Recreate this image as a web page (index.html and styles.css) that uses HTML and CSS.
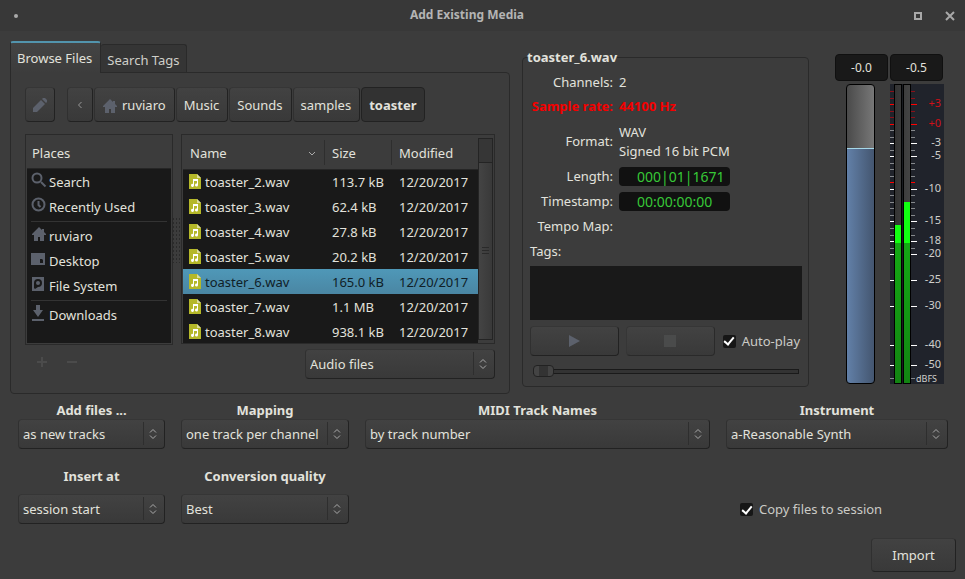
FILE: index.html
```html
<!DOCTYPE html>
<html lang="en">
<head>
<meta charset="utf-8">
<title>Add Existing Media</title>
<link rel="stylesheet" href="styles.css">
</head>
<body>
<svg class="defs" aria-hidden="true">
  <symbol id="home" viewBox="0 0 16 16"><path d="M8 1 1 8v1h2v6h4v-4h2v4h4V9h2V8l-2-2V3h-2v1z"/></symbol>
  <symbol id="audio" viewBox="0 0 12 15"><path fill="#b5b829" d="M0 0h8l4 4v11H0z"/><path fill="#dcdc9c" d="M8 0l4 4H8z"/><path fill="#fff" d="M4 5h5v6a1.500 1.500 0 1 1-1-1.400V7H5v4.500A1.500 1.500 0 1 1 4 10z"/></symbol>
  <symbol id="updown" viewBox="0 0 8 12"><path d="M1 4.500l3-3 3 3M1 7.500l3 3 3-3" fill="none" stroke="#aaa"/></symbol>
</svg>

<header class="titlebar">
  <span class="dot"></span>
  <h1>Add Existing Media</h1>
  <button class="win" aria-label="Maximize"><svg width="8" height="8"><path d="M1 1h6v6H1z" fill="none" stroke="#a8a8a8" stroke-width="2"/></svg></button>
  <button class="win" aria-label="Close"><svg width="10" height="10"><path d="M1 1l8 8M9 1L1 9" stroke="#a8a8a8" stroke-width="2"/></svg></button>
</header>

<main>
  <div class="upper">
    <section class="browser">
      <div class="tabs" role="tablist">
        <button class="tab active" role="tab" aria-selected="true">Browse Files</button>
        <button class="tab" role="tab" aria-selected="false">Search Tags</button>
      </div>
      <div class="panel">
        <nav class="path">
          <button class="btn edit" aria-label="Type a file name"><svg width="16" height="16" viewBox="0 0 16 16"><path d="M1 11l8-8 4 4-8 8H1zM10 2l1-1h2l2 2v2l-1 1z"/></svg></button>
          <button class="btn back" aria-label="Back"><svg width="6" height="8"><path d="M4.500 1l-3 3 3 3" fill="none" stroke="#999"/></svg></button>
          <button class="btn"><svg width="16" height="16"><use href="#home"/></svg>ruviaro</button>
          <button class="btn">Music</button>
          <button class="btn">Sounds</button>
          <button class="btn">samples</button>
          <button class="btn current">toaster</button>
        </nav>
        <div class="lists">
          <div class="places">
            <h2>Places</h2>
            <ul>
              <li><svg width="16" height="16" viewBox="0 0 16 16"><path d="M10 10l4.500 4.500" stroke="#5c616c" stroke-width="2"/><circle cx="6" cy="6" r="4.500" fill="none" stroke="#5c616c" stroke-width="2"/></svg>Search</li>
              <li><svg width="16" height="16" viewBox="0 0 16 16"><circle cx="7.500" cy="7.500" r="6" fill="none" stroke="#5c616c" stroke-width="2"/><path d="M7.500 4v4l2 2" fill="none" stroke="#5c616c" stroke-width="2"/></svg>Recently Used</li>
              <li class="group"><svg width="16" height="16"><use href="#home"/></svg>ruviaro</li>
              <li><svg width="16" height="16" viewBox="0 0 16 16"><path fill-rule="evenodd" d="M0 2h14v12H0zM9 8v4h3V9l-1-1z"/></svg>Desktop</li>
              <li><svg width="16" height="16" viewBox="0 0 16 16"><path d="M1 1h12v14H1z"/><path d="M3 12V7a4 4 0 1 1 4 4L4 13z" fill="#191919"/><circle cx="7" cy="7" r="2"/></svg>File System</li>
              <li class="group"><svg width="16" height="16" viewBox="0 0 16 16"><path d="M5 0h4v5h3l-5 7-5-7h3zM1 14h12v2H1z"/></svg>Downloads</li>
            </ul>
          </div>
          <div class="grip"></div>
          <div class="files">
            <table>
              <thead><tr><th>Name<svg width="8" height="6"><path d="M1 1l3 3 3-3" fill="none" stroke="#aaa"/></svg></th><th>Size</th><th>Modified</th></tr></thead>
              <tbody>
                <tr><td><svg width="12" height="15"><use href="#audio"/></svg>toaster_2.wav</td><td>113.7 kB</td><td>12/20/2017</td></tr>
                <tr><td><svg width="12" height="15"><use href="#audio"/></svg>toaster_3.wav</td><td>62.4 kB</td><td>12/20/2017</td></tr>
                <tr><td><svg width="12" height="15"><use href="#audio"/></svg>toaster_4.wav</td><td>27.8 kB</td><td>12/20/2017</td></tr>
                <tr><td><svg width="12" height="15"><use href="#audio"/></svg>toaster_5.wav</td><td>20.2 kB</td><td>12/20/2017</td></tr>
                <tr class="selected"><td><svg width="12" height="15"><use href="#audio"/></svg>toaster_6.wav</td><td>165.0 kB</td><td>12/20/2017</td></tr>
                <tr><td><svg width="12" height="15"><use href="#audio"/></svg>toaster_7.wav</td><td>1.1 MB</td><td>12/20/2017</td></tr>
                <tr><td><svg width="12" height="15"><use href="#audio"/></svg>toaster_8.wav</td><td>938.1 kB</td><td>12/20/2017</td></tr>
              </tbody>
            </table>
            <div class="scroll"><div class="thumb"></div></div>
          </div>
        </div>
        <div class="below">
          <button class="mini" aria-label="Add bookmark" disabled><svg width="10" height="10"><path d="M5 0v10M0 5h10" stroke="#4b4b4b" stroke-width="2"/></svg></button>
          <button class="mini" aria-label="Remove bookmark" disabled><svg width="10" height="10"><path d="M0 5h10" stroke="#4b4b4b" stroke-width="2"/></svg></button>
          <span class="select filter"><select aria-label="File filter"><option>Audio files</option></select><svg width="8" height="12"><use href="#updown"/></svg></span>
        </div>
      </div>
    </section>

    <fieldset class="info">
      <legend>toaster_6.wav</legend>
      <dl>
        <dt>Channels:</dt><dd>2</dd>
        <dt class="warn">Sample rate:</dt><dd class="warn">44100 Hz</dd>
        <dt class="format">Format:</dt><dd class="format">WAV<br>Signed 16 bit PCM</dd>
        <dt>Length:</dt><dd><span class="clock">000|01|1671</span></dd>
        <dt>Timestamp:</dt><dd><span class="clock">00:00:00:00</span></dd>
        <dt>Tempo Map:</dt><dd></dd>
      </dl>
      <label class="taglabel" for="tags">Tags:</label>
      <textarea id="tags"></textarea>
      <div class="transport">
        <button class="btn" aria-label="Play"><svg width="12" height="12"><path d="M1 0l11 6-11 6z"/></svg></button>
        <button class="btn off" aria-label="Stop" disabled><svg width="12" height="12"><path d="M0 0h12v12H0z" fill="#4a4b4b"/></svg></button>
        <label class="check"><input type="checkbox" checked>Auto-play</label>
      </div>
      <input class="seek" type="range" value="0" aria-label="Position">
    </fieldset>

    <section class="level">
      <input class="readout" value="-0.0" aria-label="Gain">
      <button class="readout">-0.5</button>
      <input class="fader" type="range" value="79" aria-label="Gain fader">
      <svg class="meter" width="54" height="300" viewBox="0 0 54 300" role="img" aria-label="Level meter">
        <defs>
          <linearGradient id="trough"><stop stop-color="#333"/><stop offset="1" stop-color="#444"/></linearGradient>
          <linearGradient id="green" x1="0" y1="0" x2="0" y2="1"><stop stop-color="#14a814"/><stop offset="1" stop-color="#128412"/></linearGradient>
        </defs>
        <path fill="#20232b" d="M0 0h54v300H0z"/>
        <path stroke="#85888c" d="M0 46.500h25M0 53.500h25M0 66.500h25M0 79.500h25M0 85.500h25M0 92.500h25M0 111.500h25M0 118.500h25M0 124.500h25M0 131.500h25M0 144.500h25M0 151.500h25M0 164.500h25M0 294.500h25"/>
        <path stroke="#8c1018" d="M0 7.500h25M0 14.500h25M0 27.500h25M0 33.500h25"/>
        <path stroke="#f00" d="M0 20.500h27M0 40.500h27M0 98.500h25"/>
        <path stroke="#fff" d="M0 59.500h27M0 72.500h27M0 105.500h27M0 137.500h27M0 157.500h27M0 170.500h27M0 196.500h27M0 222.500h27M0 261.500h27M0 281.500h27"/>
        <path fill="#000" d="M4 0h8v300H4zM13 0h8v300h-8z"/><path fill="#191b20" d="M12 0h1v300h-1z"/>
        <path fill="url(#trough)" d="M5 1h6v298H5zM14 1h6v298h-6z"/>
        <path fill="#1f1" d="M5 141h6v18H5zM14 118h6v41h-6z"/>
        <path fill="url(#green)" d="M5 159h6v140H5zM14 159h6v140h-6z"/>
        <g class="scale">
          <g class="hot"><text x="51" y="23">+3</text><text x="51" y="43">+0</text></g>
          <text x="51" y="62">-3</text><text x="51" y="75">-5</text><text x="51" y="108">-10</text><text x="51" y="140">-15</text><text x="51" y="160">-18</text><text x="51" y="173">-20</text><text x="51" y="199">-25</text><text x="51" y="225">-30</text><text x="51" y="264">-40</text><text x="51" y="284">-50</text>
          <text class="unit" x="47" y="298">dBFS</text>
        </g>
      </svg>
    </section>
  </div>

  <div class="options">
    <div class="field"><label for="add">Add files ...</label><span class="select"><select id="add"><option>as new tracks</option></select><svg width="8" height="12"><use href="#updown"/></svg></span></div>
    <div class="field"><label for="map">Mapping</label><span class="select"><select id="map"><option>one track per channel</option></select><svg width="8" height="12"><use href="#updown"/></svg></span></div>
    <div class="field"><label for="midi">MIDI Track Names</label><span class="select"><select id="midi"><option>by track number</option></select><svg width="8" height="12"><use href="#updown"/></svg></span></div>
    <div class="field"><label for="inst">Instrument</label><span class="select"><select id="inst"><option>a-Reasonable Synth</option></select><svg width="8" height="12"><use href="#updown"/></svg></span></div>
    <div class="field tall"><label for="insert">Insert at</label><span class="select"><select id="insert"><option>session start</option></select><svg width="8" height="12"><use href="#updown"/></svg></span></div>
    <div class="field tall"><label for="quality">Conversion quality</label><span class="select"><select id="quality"><option>Best</option></select><svg width="8" height="12"><use href="#updown"/></svg></span></div>
    <label class="check copy"><input type="checkbox" checked>Copy files to session</label>
  </div>
  <footer><button class="btn import">Import</button></footer>
</main>
</body>
</html>
```
FILE: styles.css
```css
* { box-sizing: border-box; }
body {
  margin: 0;
  min-height: 100vh;
  background: #3c3c3c;
  color: #e2e2dc;
  font: 13px/19px "Noto Sans", sans-serif;
}
button, input, select, textarea { font: inherit; color: inherit; margin: 0; padding: 0; border: 0; background: none; }
h1, h2, ul, dl, dd { margin: 0; padding: 0; }
svg { fill: #5c616c; flex: none; }
.defs { display: none; }

.titlebar {
  display: grid;
  grid-template-columns: 33px 1fr 33px 31px;
  align-items: center;
  height: 31px;
  background: #383838;
}
.titlebar h1 { font-size: 12px; line-height: 16px; margin-bottom: 1px; text-align: center; color: #b4b4b4; }
.dot { width: 4px; height: 4px; margin-left: 14px; border-radius: 2px; background: #aaa; }
.win { display: grid; place-items: center; height: 31px; }

.upper { display: grid; grid-template-columns: 500fr 325fr 109px; padding: 10px 21px 0 10px; }
.browser { min-width: 0; }
.tabs { display: flex; align-items: flex-end; height: 31px; }
.tab {
  height: 28px;
  padding: 4px 6px 0;
  border: 1px solid #2a2a2a;
  border-width: 1px 1px 0 0;
  border-radius: 3px 3px 0 0;
  background: #353535;
  color: #cfcfc9;
}
.tab.active {
  z-index: 1;
  height: 32px;
  margin-bottom: -1px;
  padding: 0 8px 0 6px;
  border-width: 2px 1px 0;
  border-top-color: #5294ad;
  background: linear-gradient(#444, #3c3c3c);
  color: #e2e2dc;
}
.panel { padding: 14px; border: 1px solid #2a2a2a; border-radius: 0 4px 4px 4px; }

.btn {
  display: inline-flex;
  align-items: center;
  justify-content: center;
  border: 1px solid #2a2a2a;
  border-color: #363636 #222 #222 #303030;
  border-radius: 4px;
  background: linear-gradient(#424242, #393939);
}
.path { display: flex; gap: 1px; }
.path .btn { height: 35px; padding: 2px 8px 0 7px; gap: 4px; }
.path .edit { width: 30px; margin-right: 11px; padding: 0; }
.path .back { width: 26px; padding: 0; }
.path .current { border-color: #222; background: #323232; font-weight: bold; }

.lists { display: flex; height: 211px; margin-top: 12px; }
.places, .files { border: 1px solid #2a2a2a; }
.places { width: 148px; padding: 0 1px 1px; }
.places h2, th { height: 34px; border-bottom: 1px solid #262626; font-weight: normal; }
.places h2 { padding: 9px 5px 0; font-size: 13px; line-height: 19px; }
.places ul { height: 174px; background: #191919; list-style: none; }
.places li { display: flex; align-items: center; gap: 2px; height: 25px; padding: 1px 0 0 4px; }
.places li svg { margin-bottom: 4px; }
.places li.group { height: 29px; padding-top: 5px; background: linear-gradient(#333, #333) 4px 2px / 136px 1px no-repeat; }
.grip {
  width: 8px;
  height: 46px;
  align-self: center;
  background: radial-gradient(circle, #2a2a2a 1px, transparent 1px) 2px 0 / 3px 4px;
}
.files { flex: 1; display: flex; height: 210px; padding: 0 1px 1px; overflow: hidden; }
table { flex: 1; border-collapse: collapse; table-layout: fixed; background: #191919; }
th { padding: 3px 8px 0 7px; text-align: left; background: #3c3c3c; }
th:nth-child(1) { width: 141px; }
th:nth-child(2) { width: 67px; }
th + th { padding-left: 8px; background: linear-gradient(#2e2e2e, #2e2e2e) 0 5px / 1px 25px no-repeat #3c3c3c; }
th svg { float: right; margin-top: 7px; }
td { height: 25px; padding: 1px 0 0 8px; white-space: nowrap; }
td:first-child { padding-left: 6px; }
td svg { margin-right: 4px; vertical-align: -2px; }
.selected { background: linear-gradient(#4f98b8, #4a86a3); color: #102027; }
.scroll { width: 15px; height: 202px; margin-top: 3px; padding-top: 23px; border: 1px solid #242424; background: #363636; }
.thumb {
  height: 177px;
  border-top: 1px solid #242424;
  background: repeating-linear-gradient(#2a2a2a 0 1px, transparent 1px 3px) 3px 84px / 7px 8px no-repeat, linear-gradient(90deg, #444, #393939);
}
.below { display: flex; align-items: center; margin-top: 4px; height: 30px; }
.mini { display: grid; place-items: center; width: 30px; height: 24px; margin-bottom: 4px; }
.mini:first-child { margin-left: 2px; }
.filter { width: 190px; margin-left: auto; }

.select { position: relative; display: block; }
.select select {
  display: block;
  width: 100%;
  height: 30px;
  padding: 1px 24px 0 4px;
  appearance: none;
  border: 1px solid #2a2a2a;
  border-color: #363636 #222 #222 #303030;
  border-radius: 4px;
  background: linear-gradient(#2e2e2e, #2e2e2e) calc(100% - 20px) 2px / 1px 23px no-repeat, linear-gradient(#424242, #393939);
}
.select svg { position: absolute; right: 8px; top: 9px; pointer-events: none; }

.info {
  display: flex;
  flex-direction: column;
  min-width: 0;
  height: 339px;
  margin: 7px 26px 0 12px;
  padding: 3px 6px 0 7px;
  border: 1px solid #2a2a2a;
  border-radius: 4px;
}
legend { margin-left: -3px; padding: 0; font-weight: bold; }
dl { display: grid; grid-template-columns: 83px 1fr; column-gap: 6px; grid-template-rows: 24px 25px 45px 25px 25px 25px; align-items: center; }
dt { text-align: right; white-space: nowrap; }
.warn { color: #f40000; font-weight: bold; }
.clock { display: block; width: 111px; padding-left: 18px; border-radius: 4px; background: #111; color: #37c837; font-size: 14px; }
.taglabel { line-height: 25px; }
textarea { display: block; width: 100%; height: 54px; margin-top: 2px; background: #191919; resize: none; }
.transport { display: flex; align-items: center; gap: 7px; margin-top: 6px; }
.transport .btn { flex: 1; height: 30px; }
.btn.off { border-color: #363636 #2a2a2a #2a2a2a #363636; }
.check { display: flex; align-items: center; gap: 6px; white-space: nowrap; color: #cbcbc6; }
.transport .check { padding: 0 2px 0 1px; }
.check input {
  width: 13px;
  height: 13px;
  appearance: none;
  border-radius: 2px;
  background: #161616;
  display: grid;
  place-items: center;
}
.check input::before { content: ""; width: 4px; height: 8px; margin-bottom: 2px; border: solid #fff; border-width: 0 2px 2px 0; rotate: 40deg; }
.seek {
  appearance: none;
  height: 12px;
  margin: 9px 3px 0;
  background: linear-gradient(#333, #333) 1px 5px / calc(100% - 2px) 3px no-repeat, linear-gradient(#1a1a1a, #1a1a1a) 0 4px / 100% 5px no-repeat;
}
.seek::-webkit-slider-thumb {
  appearance: none;
  width: 21px;
  height: 12px;
  border: 1px solid #222;
  border-radius: 4px;
  background: linear-gradient(90deg, #444 5px, #333 5px 14px, #444 14px);
}

.level { display: grid; grid-template-columns: 53px 54px; column-gap: 2px; row-gap: 3px; align-content: start; padding-top: 13px; }
.readout { width: 53px; height: 27px; border: 1px solid #101010; border-radius: 4px; background: #191919; font-size: 12px; text-align: center; }
.fader {
  appearance: none;
  writing-mode: vertical-lr;
  direction: rtl;
  width: 29px;
  height: 300px;
  margin-left: 11px;
  border: 1px solid #000;
  border-radius: 4px;
  background: linear-gradient(#a6d8e8, #a6d8e8) 0 63px / 100% 1px no-repeat, linear-gradient(90deg, #4a4a4a, #777) 0 0 / 100% 63px no-repeat, linear-gradient(90deg, #6280a8, #445670);
}
.fader::-webkit-slider-thumb { appearance: none; width: 27px; height: 1px; background: transparent; }
.scale { fill: #d0d0cc; font-size: 11px; text-anchor: end; }
.hot { fill: #d01018; }
.unit { font-size: 9px; }

.options {
  display: grid;
  grid-template-columns: 147fr 168fr 345fr 222fr;
  gap: 18px 16px;
  padding: 7px 17px 0 18px;
}
.field label { display: block; text-align: center; font-weight: bold; }
.field .select { margin-top: -1px; }
.tall .select { margin-top: 8px; }
.copy { grid-column: 4; align-self: end; margin: 0 0 5px 14px; }
footer { display: flex; justify-content: flex-end; padding: 14px 9px 8px; }
.import { width: 85px; height: 34px; }
```
